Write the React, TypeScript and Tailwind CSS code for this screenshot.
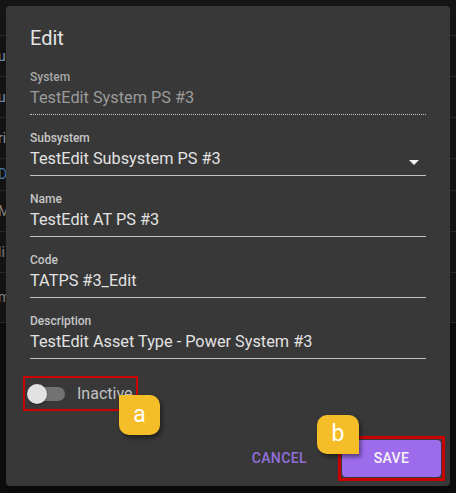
import React from 'react';

type Field = {
  label: string;
  value: string;
  disabled?: boolean;
  select?: boolean;
};

const fields: Field[] = [
  { label: 'System', value: 'TestEdit System PS #3', disabled: true },
  { label: 'Subsystem', value: 'TestEdit Subsystem PS #3', select: true },
  { label: 'Name', value: 'TestEdit AT PS #3' },
  { label: 'Code', value: 'TATPS #3_Edit' },
  { label: 'Description', value: 'TestEdit Asset Type - Power System #3' },
];

// table rows peeking out behind the modal
const backRows = [
  { h: 'h-[36px]', text: '', color: 'text-[#b0452f]' },
  { h: 'h-[41px]', text: 'u', color: 'text-[#7f9fc4]' },
  { h: 'h-[41px]', text: 'u', color: 'text-[#7f9fc4]' },
  { h: 'h-[41px]', text: 'ri', color: 'text-[#8fa3b8]' },
  { h: 'h-[32px]', text: 'D', color: 'text-[#4f7fb8]' },
  { h: 'h-[41px]', text: 'M', color: 'text-[#8c8c8c]' },
  { h: 'h-[41px]', text: 'li', color: 'text-[#8c8c8c]' },
  { h: 'h-[50px]', text: 'm', color: 'text-[#8c8c8c]' },
];

const TextField: React.FC<{ field: Field }> = ({ field }) => (
  <div className="flex flex-col">
    <div
      className={`h-[16px] text-[12px] leading-[16px] font-medium ${
        field.disabled ? 'text-[#a8a8a8]' : 'text-[#c6c6c6]'
      }`}
    >
      {field.label}
    </div>
    <div
      className={`mt-[1px] flex items-center justify-between pb-[4px] ${
        field.disabled ? 'border-b border-dotted border-[#c8c8c8]' : 'border-b border-[#c3c3c3]'
      }`}
    >
      <span
        className={`h-[24px] text-[16.3px] leading-[24px] ${
          field.disabled ? 'text-[#9b9b9b]' : 'text-[#e2e2e2]'
        }`}
      >
        {field.value}
      </span>
      {field.select && (
        <svg width="10" height="5" viewBox="0 0 10 5" className="mr-[7px] mt-[6px]">
          <path d="M0 0 L10 0 L5 5 Z" fill="#f2f2f2" />
        </svg>
      )}
    </div>
  </div>
);

export default function App() {
  return (
    <div className="relative w-[456px] h-[493px] overflow-hidden bg-[#0e0e0e] font-['Roboto',sans-serif]">
      {/* backdrop table */}
      <div className="flex flex-col bg-[#161616]">
        {backRows.map((r, i) => (
          <div
            key={i}
            className={`${r.h} flex items-center border-b border-[#2c2c2c] text-[14px] ${r.color}`}
          >
            <span className="ml-[-2px]">{r.text}</span>
          </div>
        ))}
      </div>

      {/* dialog */}
      <div className="absolute left-[6px] top-[6px] w-[444px] h-[480px] flex flex-col rounded-[4px] bg-[#383838] shadow-[0_11px_15px_-7px_rgba(0,0,0,0.2),0_24px_38px_3px_rgba(0,0,0,0.14)]">
        <div className="px-[24px] pt-[16px]">
          <h2 className="h-[32px] text-[20px] leading-[32px] font-normal text-[#e4e4e4]">Edit</h2>
          <div className="mt-[15px] flex flex-col gap-[15px]">
            {fields.map((f) => (
              <TextField key={f.label} field={f} />
            ))}
          </div>

          <div className="mt-[17px] ml-[-7px] w-fit h-[35px] flex items-center border-2 border-[#cc0000] pl-[6px] pr-[3px]">
            <div className="relative w-[34px] h-[14px] rounded-full bg-[#727272]">
              <div className="absolute left-[-4px] top-[-3px] w-[20px] h-[20px] rounded-full bg-[#e2e2e2] shadow-[0_2px_1px_-1px_rgba(0,0,0,0.2),0_1px_1px_0_rgba(0,0,0,0.14),0_1px_3px_0_rgba(0,0,0,0.12)]" />
            </div>
            <span className="ml-[12px] text-[16px] leading-[24px] text-[#c3c3c3]">Inactive</span>
          </div>
        </div>

        <div className="mt-auto flex items-center justify-end pr-[5px] pb-[5px]">
          <button className="text-[14px] font-medium tracking-[0.4px] uppercase text-[#9270dc]">
            Cancel
          </button>
          <div className="ml-[31px] border-[3px] border-[#cc0000] p-[1px]">
            <button className="w-[99px] h-[37px] rounded-[4px] bg-[#9d6cec] text-[14px] font-medium tracking-[0.4px] uppercase text-[#f5f5f5]">
              Save
            </button>
          </div>
        </div>
      </div>

      {/* annotation badges */}
      <div className="absolute left-[119px] top-[395px] w-[41px] h-[40px] flex items-center justify-center rounded-[10px] rounded-tl-none bg-[#f5bd27] text-[23px] text-white shadow-[2px_3px_4px_rgba(0,0,0,0.45)]">
        a
      </div>
      <div className="absolute left-[317px] top-[415px] w-[42px] h-[39px] flex items-center justify-center rounded-[10px] rounded-br-none bg-[#f5bd27] text-[23px] text-white shadow-[2px_3px_4px_rgba(0,0,0,0.45)]">
        b
      </div>
    </div>
  );
}
